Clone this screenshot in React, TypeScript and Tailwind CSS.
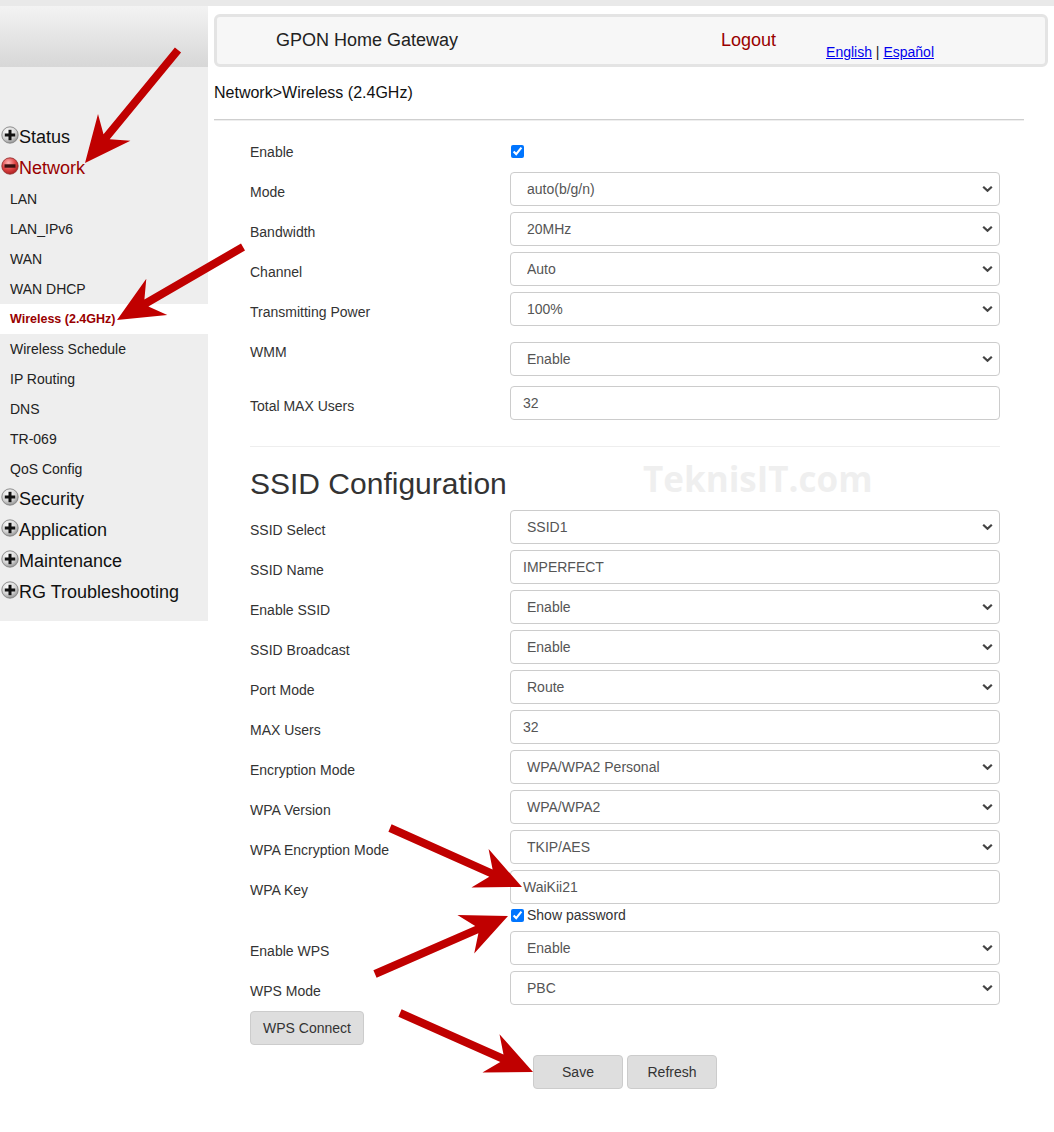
import React from 'react'

const FONT = { fontFamily: '"Liberation Sans", Arial, sans-serif' }

type Pt = [number, number]

// red annotation arrows drawn over the screenshot
const ARROWS: [Pt, Pt][] = [
  [[178, 50], [85, 163]],
  [[243, 247], [117, 320]],
  [[390, 828], [522, 887]],
  [[375, 974], [508, 916]],
  [[400, 1013], [533, 1072]],
]

function arrowPoints([x1, y1]: Pt, [x2, y2]: Pt) {
  const shaft = 8
  const headLen = 46
  const headW = 21
  const notch = 12
  const dx = x2 - x1
  const dy = y2 - y1
  const len = Math.hypot(dx, dy)
  const ux = dx / len
  const uy = dy / len
  const nx = -uy
  const ny = ux
  const bx = x2 - ux * headLen
  const by = y2 - uy * headLen
  const cx = x2 - ux * (headLen - notch)
  const cy = y2 - uy * (headLen - notch)
  const pts: Pt[] = [
    [x1 + (nx * shaft) / 2, y1 + (ny * shaft) / 2],
    [cx + (nx * shaft) / 2, cy + (ny * shaft) / 2],
    [bx + nx * headW, by + ny * headW],
    [x2, y2],
    [bx - nx * headW, by - ny * headW],
    [cx - (nx * shaft) / 2, cy - (ny * shaft) / 2],
    [x1 - (nx * shaft) / 2, y1 - (ny * shaft) / 2],
  ]
  return pts.map((p) => p.map((v) => v.toFixed(1)).join(',')).join(' ')
}

function PlusIcon({ open }: { open?: boolean }) {
  const id = open ? 'gRed' : 'gGray'
  return (
    <svg width="18" height="18" viewBox="0 0 18 18" className="shrink-0 -mt-[6px]">
      <defs>
        <radialGradient id={id} cx="40%" cy="30%" r="75%">
          {open ? (
            <>
              <stop offset="0%" stopColor="#ffb3b3" />
              <stop offset="55%" stopColor="#e04545" />
              <stop offset="100%" stopColor="#a51c1c" />
            </>
          ) : (
            <>
              <stop offset="0%" stopColor="#ffffff" />
              <stop offset="60%" stopColor="#d4d4d4" />
              <stop offset="100%" stopColor="#8a8a8a" />
            </>
          )}
        </radialGradient>
      </defs>
      <circle cx="9" cy="9" r="8.2" fill={`url(#${id})`} stroke={open ? '#8e2a2a' : '#7a7a7a'} strokeWidth="0.8" />
      {open ? (
        <rect x="3.5" y="7.3" width="11" height="3.4" fill="#3a1010" />
      ) : (
        <>
          <rect x="3.8" y="7.5" width="10.4" height="3" fill="#111" />
          <rect x="7.5" y="3.8" width="3" height="10.4" fill="#111" />
        </>
      )}
    </svg>
  )
}

function Chevron() {
  return (
    <svg width="11" height="7" viewBox="0 0 11 7" className="absolute right-[7px] top-1/2 -translate-y-1/2 pointer-events-none">
      <path d="M1.2 1.2 L5.5 5.3 L9.8 1.2" fill="none" stroke="#444" strokeWidth="2.2" />
    </svg>
  )
}

function Select({ value }: { value: string }) {
  return (
    <div className="relative w-[490px]">
      <select
        defaultValue={value}
        className="w-full h-[34px] appearance-none border border-[#cccccc] rounded-[4px] bg-white pl-[16px] text-[14px] text-[#555] outline-none"
        style={FONT}
      >
        <option>{value}</option>
      </select>
      <Chevron />
    </div>
  )
}

function Input({ value }: { value: string }) {
  return (
    <input
      defaultValue={value}
      className="w-[490px] h-[34px] border border-[#cccccc] rounded-[4px] bg-white pl-[12px] text-[14px] text-[#555] outline-none"
      style={FONT}
    />
  )
}

function Row({ label, children, extra }: { label: string; children: React.ReactNode; extra?: string }) {
  return (
    <div className={`flex h-[40px] ${extra ?? ''}`}>
      <div className="w-[260px] pt-[10px] leading-5 text-[14px] text-[#333]">{label}</div>
      <div>{children}</div>
    </div>
  )
}

const subItems = ['LAN', 'LAN_IPv6', 'WAN', 'WAN DHCP', 'Wireless (2.4GHz)', 'Wireless Schedule', 'IP Routing', 'DNS', 'TR-069', 'QoS Config']

export default function App() {
  return (
    <div className="relative w-[1054px] min-h-[1132px] bg-white text-[#333]" style={FONT}>
      <div className="h-[6px] bg-[#e9e9e9]" />
      <div className="flex">
        {/* sidebar */}
        <div className="w-[208px] shrink-0">
          <div className="h-[61px] bg-gradient-to-b from-[#f3f3f3] to-[#d7d7d7]" />
          <div className="bg-[#eeeeee] pt-[55px] pb-[13px]">
            <div className="flex items-center h-[31px] pl-[1px] text-[18px] text-[#111]">
              <PlusIcon />
              <span>Status</span>
            </div>
            <div className="flex items-center h-[31px] pl-[1px] text-[18px] text-[#990000]">
              <PlusIcon open />
              <span>Network</span>
            </div>
            <div>
              {subItems.map((s) =>
                s === 'Wireless (2.4GHz)' ? (
                  <div key={s} className="flex items-center h-[30px] pl-[10px] bg-white text-[12.5px] font-bold text-[#990000]">
                    {s}
                  </div>
                ) : (
                  <div key={s} className="flex items-center h-[30px] pl-[10px] text-[14px] text-[#222]">
                    {s}
                  </div>
                ),
              )}
            </div>
            {['Security', 'Application', 'Maintenance', 'RG Troubleshooting'].map((s) => (
              <div key={s} className="flex items-center h-[31px] pl-[1px] text-[18px] text-[#111]">
                <PlusIcon />
                <span>{s}</span>
              </div>
            ))}
          </div>
        </div>

        {/* content */}
        <div className="flex-1 rounded-tl-[8px] bg-white">
          <div className="ml-[6px] mr-[6px] mt-[8px] h-[53px] rounded-[6px] border-[3px] border-[#e4e4e4] bg-[#f7f7f7] flex">
            <div className="pl-[59px] w-[504px] pt-[10px] text-[18px] text-[#222]">GPON Home Gateway</div>
            <div className="pt-[10px] text-[18px] text-[#990000]">Logout</div>
            <div className="ml-[50px] pt-[25px] text-[14px] text-[#222]">
              <a href="#" className="text-[#0000ee] underline">English</a> |{' '}
              <a href="#" className="text-[#0000ee] underline">Español</a>
            </div>
          </div>

          <div className="ml-[6px] pt-[16px] text-[16px] text-[#111] leading-5">Network&gt;Wireless (2.4GHz)</div>

          <div className="ml-[6px] w-[810px] mt-[16px] border-t border-[#cfcfcf] border-b border-b-[#eeeeee]" />

          <div className="ml-[42px] pt-[11px]">
            <div className="flex h-[40px]">
              <div className="w-[260px] pt-[10px] leading-5 text-[14px] text-[#333]">Enable</div>
              <div className="pt-[13px] pl-[1px]">
                <input type="checkbox" defaultChecked className="w-[13px] h-[13px] m-0 accent-[#0075ff] block" />
              </div>
            </div>
            <Row label="Mode"><Select value="auto(b/g/n)" /></Row>
            <Row label="Bandwidth"><Select value="20MHz" /></Row>
            <Row label="Channel"><Select value="Auto" /></Row>
            <Row label="Transmitting Power"><Select value="100%" /></Row>
            <Row label="WMM" extra="h-[54px]">
              <div className="pt-[10px]"><Select value="Enable" /></div>
            </Row>
            <Row label="Total MAX Users"><Input value="32" /></Row>

            <div className="w-[750px] mt-[20px] border-t border-[#eeeeee]" />
            <div className="h-[36px] mt-[19px] mb-[8px] text-[30px] leading-[36px] text-[#333]">SSID Configuration</div>

            <Row label="SSID Select"><Select value="SSID1" /></Row>
            <Row label="SSID Name"><Input value="IMPERFECT" /></Row>
            <Row label="Enable SSID"><Select value="Enable" /></Row>
            <Row label="SSID Broadcast"><Select value="Enable" /></Row>
            <Row label="Port Mode"><Select value="Route" /></Row>
            <Row label="MAX Users"><Input value="32" /></Row>
            <Row label="Encryption Mode"><Select value="WPA/WPA2 Personal" /></Row>
            <Row label="WPA Version"><Select value="WPA/WPA2" /></Row>
            <Row label="WPA Encryption Mode"><Select value="TKIP/AES" /></Row>
            <div className="flex h-[34px]">
              <div className="w-[260px] pt-[10px] leading-5 text-[14px] text-[#333]">WPA Key</div>
              <Input value="WaiKii21" />
            </div>
            <div className="flex items-center h-[20px] mt-[1px] mb-[6px] pl-[261px] text-[14px] text-[#333]">
              <input type="checkbox" defaultChecked className="w-[13px] h-[13px] m-0 accent-[#0075ff]" />
              <span className="ml-[3px]">Show password</span>
            </div>
            <Row label="Enable WPS"><Select value="Enable" /></Row>
            <Row label="WPS Mode"><Select value="PBC" /></Row>

            <button className="w-[114px] h-[34px] border border-[#cccccc] rounded-[4px] bg-[#dedede] text-[14px] text-[#333]">
              WPS Connect
            </button>
            <div className="w-[750px] flex justify-center gap-[4px] mt-[10px]">
              <button className="w-[90px] h-[34px] border border-[#cccccc] rounded-[4px] bg-[#dedede] text-[14px] text-[#333]">Save</button>
              <button className="w-[90px] h-[34px] border border-[#cccccc] rounded-[4px] bg-[#dedede] text-[14px] text-[#333]">Refresh</button>
            </div>
          </div>
        </div>
      </div>

      {/* watermark */}
      <div className="absolute left-[643px] top-[453px] text-[35px] font-bold text-[#efefef] select-none" style={{ fontFamily: '"Open Sans", sans-serif' }}>
        TeknisIT.com
      </div>

      {/* annotation arrows */}
      <svg className="absolute inset-0 pointer-events-none" width="1054" height="1132" viewBox="0 0 1054 1132">
        {ARROWS.map(([a, b], i) => (
          <polygon key={i} points={arrowPoints(a, b)} fill="#c00000" />
        ))}
      </svg>
    </div>
  )
}
